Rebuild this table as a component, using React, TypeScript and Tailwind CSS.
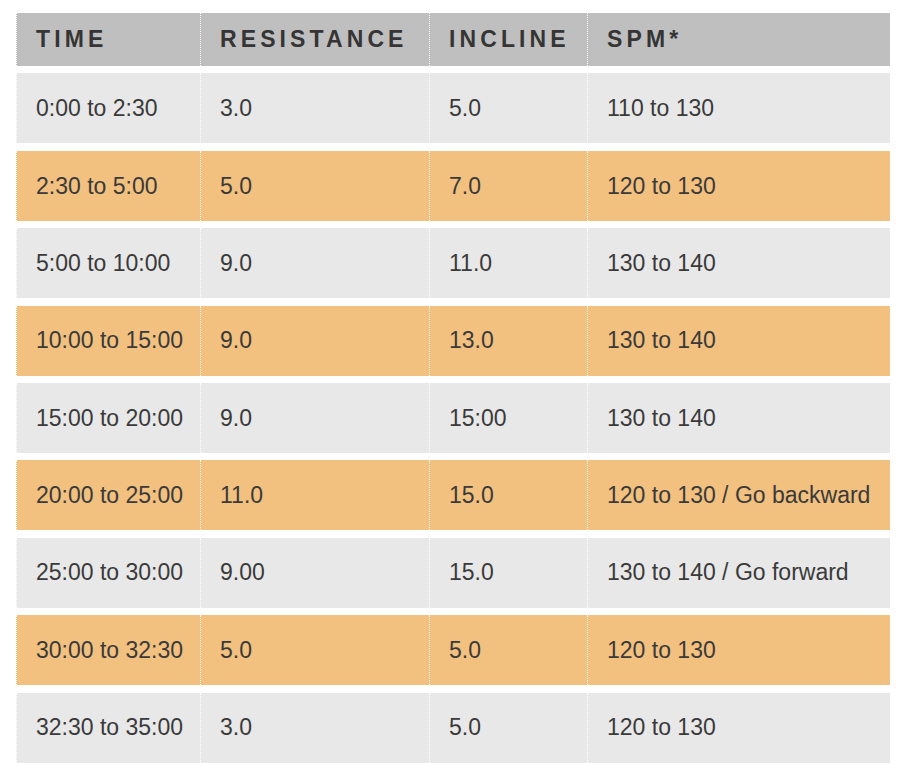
import React from 'react';

type Row = { time: string; resistance: string; incline: string; spm: string };

const rows: Row[] = [
  { time: '0:00 to 2:30', resistance: '3.0', incline: '5.0', spm: '110 to 130' },
  { time: '2:30 to 5:00', resistance: '5.0', incline: '7.0', spm: '120 to 130' },
  { time: '5:00 to 10:00', resistance: '9.0', incline: '11.0', spm: '130 to 140' },
  { time: '10:00 to 15:00', resistance: '9.0', incline: '13.0', spm: '130 to 140' },
  { time: '15:00 to 20:00', resistance: '9.0', incline: '15:00', spm: '130 to 140' },
  { time: '20:00 to 25:00', resistance: '11.0', incline: '15.0', spm: '120 to 130 / Go backward' },
  { time: '25:00 to 30:00', resistance: '9.00', incline: '15.0', spm: '130 to 140 / Go forward' },
  { time: '30:00 to 32:30', resistance: '5.0', incline: '5.0', spm: '120 to 130' },
  { time: '32:30 to 35:00', resistance: '3.0', incline: '5.0', spm: '120 to 130' },
];

const headers = ['Time', 'Resistance', 'Incline', 'SPM*'];

const cell = 'flex items-center border-l border-dotted border-white pl-[19px] whitespace-nowrap';
const cols = 'grid grid-cols-[184px_229px_158px_303px]';

export default function App() {
  return (
    <div
      className="w-[902px] h-[778px] bg-white pl-4 pt-[13px] text-[#3a3a3a]"
      style={{ fontFamily: '"Liberation Sans", Arial, sans-serif' }}
    >
      <div className="flex flex-col gap-[7.4px] w-[874px]">
        <div className={`${cols} h-[53px] bg-[#bfbfbf]`}>
          {headers.map((h) => (
            <div
              key={h}
              className={`${cell} text-[23px] font-bold uppercase tracking-[4.1px] text-[#353535]`}
            >
              {h}
            </div>
          ))}
        </div>

        {rows.map((r, i) => (
          <div
            key={r.time}
            className={`${cols} h-[70px] text-[23px] ${i % 2 === 1 ? 'bg-[#f2c07f]' : 'bg-[#e8e8e8]'}`}
          >
            <div className={cell}>{r.time}</div>
            <div className={cell}>{r.resistance}</div>
            <div className={cell}>{r.incline}</div>
            <div className={cell}>{r.spm}</div>
          </div>
        ))}
      </div>
    </div>
  );
}
